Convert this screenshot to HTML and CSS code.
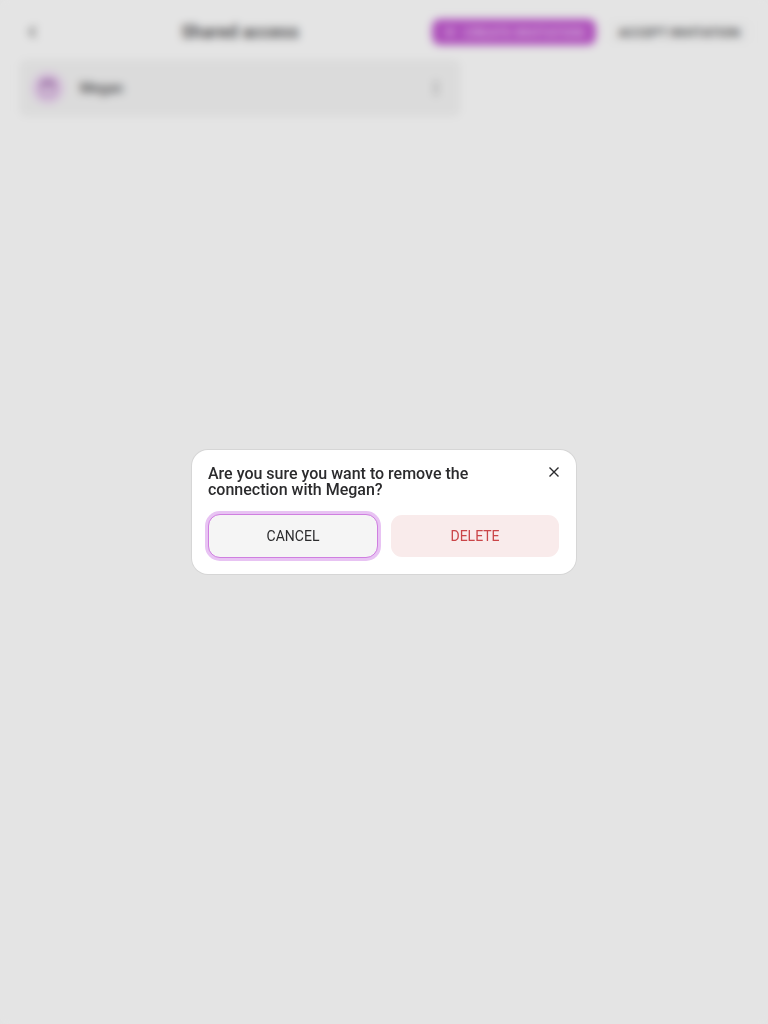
FILE: index.html
```html
<!DOCTYPE html>
<html lang="en">
<head>
<meta charset="utf-8">
<meta name="viewport" content="width=device-width, initial-scale=1">
<title>Shared access</title>
<link rel="stylesheet" href="styles.css">
</head>
<body>
<div class="page">
  <header class="header">
    <button class="icon-button" type="button" aria-label="Back">
      <svg width="16" height="16" viewBox="0 0 16 16" fill="none" stroke="currentColor" stroke-width="1.5"><path d="m11 3-5 5 5 5"/></svg>
    </button>
    <h1 class="title">Shared access</h1>
    <div class="actions">
      <button class="action primary" type="button">
        <svg width="12" height="12" viewBox="0 0 12 12" fill="none" stroke="currentColor" stroke-width="2"><path d="M6 1v10M1 6h10"/></svg>
        <span>CREATE INVITATION</span>
      </button>
      <button class="action" type="button">ACCEPT INVITATION</button>
    </div>
  </header>
  <main class="list">
    <article class="card">
      <span class="avatar">
        <svg width="18" height="18" viewBox="0 0 18 18" fill="none" stroke="currentColor" stroke-width="1.5"><rect x="2" y="2" width="14" height="14" rx="3"/><path d="M2 5h14M6 1v5M12 1v5" stroke-width="3"/></svg>
      </span>
      <span class="name">Megan</span>
      <button class="icon-button more" type="button" aria-label="More options">
        <svg width="16" height="16" viewBox="0 0 16 16" fill="currentColor"><circle cx="8" cy="3" r="1.5"/><circle cx="8" cy="8" r="1.5"/><circle cx="8" cy="13" r="1.5"/></svg>
      </button>
    </article>
  </main>
</div>
<div class="overlay">
  <section class="dialog" role="dialog" aria-modal="true" aria-labelledby="question">
    <div class="dialog-head">
      <h2 class="question" id="question">Are you sure you want to remove the connection with Megan?</h2>
      <button class="close" type="button" aria-label="Close">
        <svg width="12" height="12" viewBox="0 0 12 12" fill="none" stroke="currentColor" stroke-width="1.4"><path d="m1.5 1.5 9 9M10.5 1.5l-9 9"/></svg>
      </button>
    </div>
    <div class="choices">
      <button class="choice cancel" type="button">CANCEL</button>
      <button class="choice delete" type="button">DELETE</button>
    </div>
  </section>
</div>
</body>
</html>
```

FILE: styles.css
```css
* {
  box-sizing: border-box;
}

body {
  margin: 0;
  min-height: 100vh;
  background: #fefefe;
  color: #2b2b2d;
  font-family: Roboto, "Liberation Sans", sans-serif;
}

button {
  margin: 0;
  border: 0;
  color: inherit;
  font-family: inherit;
  cursor: pointer;
}

svg {
  display: block;
  flex: none;
}

.header {
  display: flex;
  align-items: center;
  justify-content: space-between;
  padding: 16px 16px 12px;
}

.icon-button {
  display: grid;
  place-items: center;
  width: 32px;
  height: 32px;
  padding: 0;
  background: none;
}

.title {
  margin: 0;
  color: #505052;
  font-size: 18px;
  font-weight: 600;
  line-height: 24px;
}

.actions {
  display: flex;
  gap: 10px;
}

.action {
  display: flex;
  align-items: center;
  gap: 8px;
  height: 26px;
  padding: 0 12px;
  border-radius: 8px;
  background: #fcfcfc;
  color: #454547;
  font-size: 13px;
  font-weight: 500;
  white-space: nowrap;
}

.primary {
  background: #c25ad0;
  color: #f0c8f6;
}

.list {
  display: grid;
  grid-template-columns: minmax(0, 440px);
  padding: 0 20px;
}

.card {
  display: flex;
  align-items: center;
  gap: 16px;
  height: 56px;
  padding: 0 8px 0 12px;
  border-radius: 6px;
  background: #f4f4f4;
}

.avatar {
  display: grid;
  place-items: center;
  width: 32px;
  height: 32px;
  border-radius: 16px;
  background: #eed7f3;
  color: #a06cac;
}

.name {
  flex: 1;
  color: #505052;
  font-size: 14px;
  font-weight: 500;
}

.more {
  color: #808082;
}

.overlay {
  position: fixed;
  inset: 0;
  display: grid;
  place-items: center;
  padding: 16px;
  background: rgba(0, 0, 0, 0.1);
  backdrop-filter: blur(4px);
}

.dialog {
  width: 100%;
  max-width: 384px;
  padding: 16px;
  border-radius: 16px;
  background: #fff;
  box-shadow: 0 0 0 1px #d6d6d6;
}

.dialog-head {
  display: flex;
  align-items: flex-start;
  justify-content: space-between;
  gap: 48px;
}

.question {
  margin: 0;
  font-size: 16px;
  font-weight: 500;
  line-height: 16px;
}

.close {
  display: grid;
  place-items: center;
  width: 12px;
  height: 12px;
  padding: 0;
  background: none;
}

.choices {
  display: grid;
  grid-template-columns: 1fr 1fr;
  gap: 12px;
  margin-top: 16px;
}

.choice {
  height: 44px;
  padding: 0 12px;
  border: 1px solid transparent;
  border-radius: 12px;
  background-clip: padding-box;
  font-size: 14px;
}

.cancel {
  border-color: #cf7fe0;
  background-color: #f5f5f5;
  box-shadow: 0 0 0 3px #e8c3f3;
}

.delete {
  background-color: #f9ebeb;
  color: #ca4548;
}
```
